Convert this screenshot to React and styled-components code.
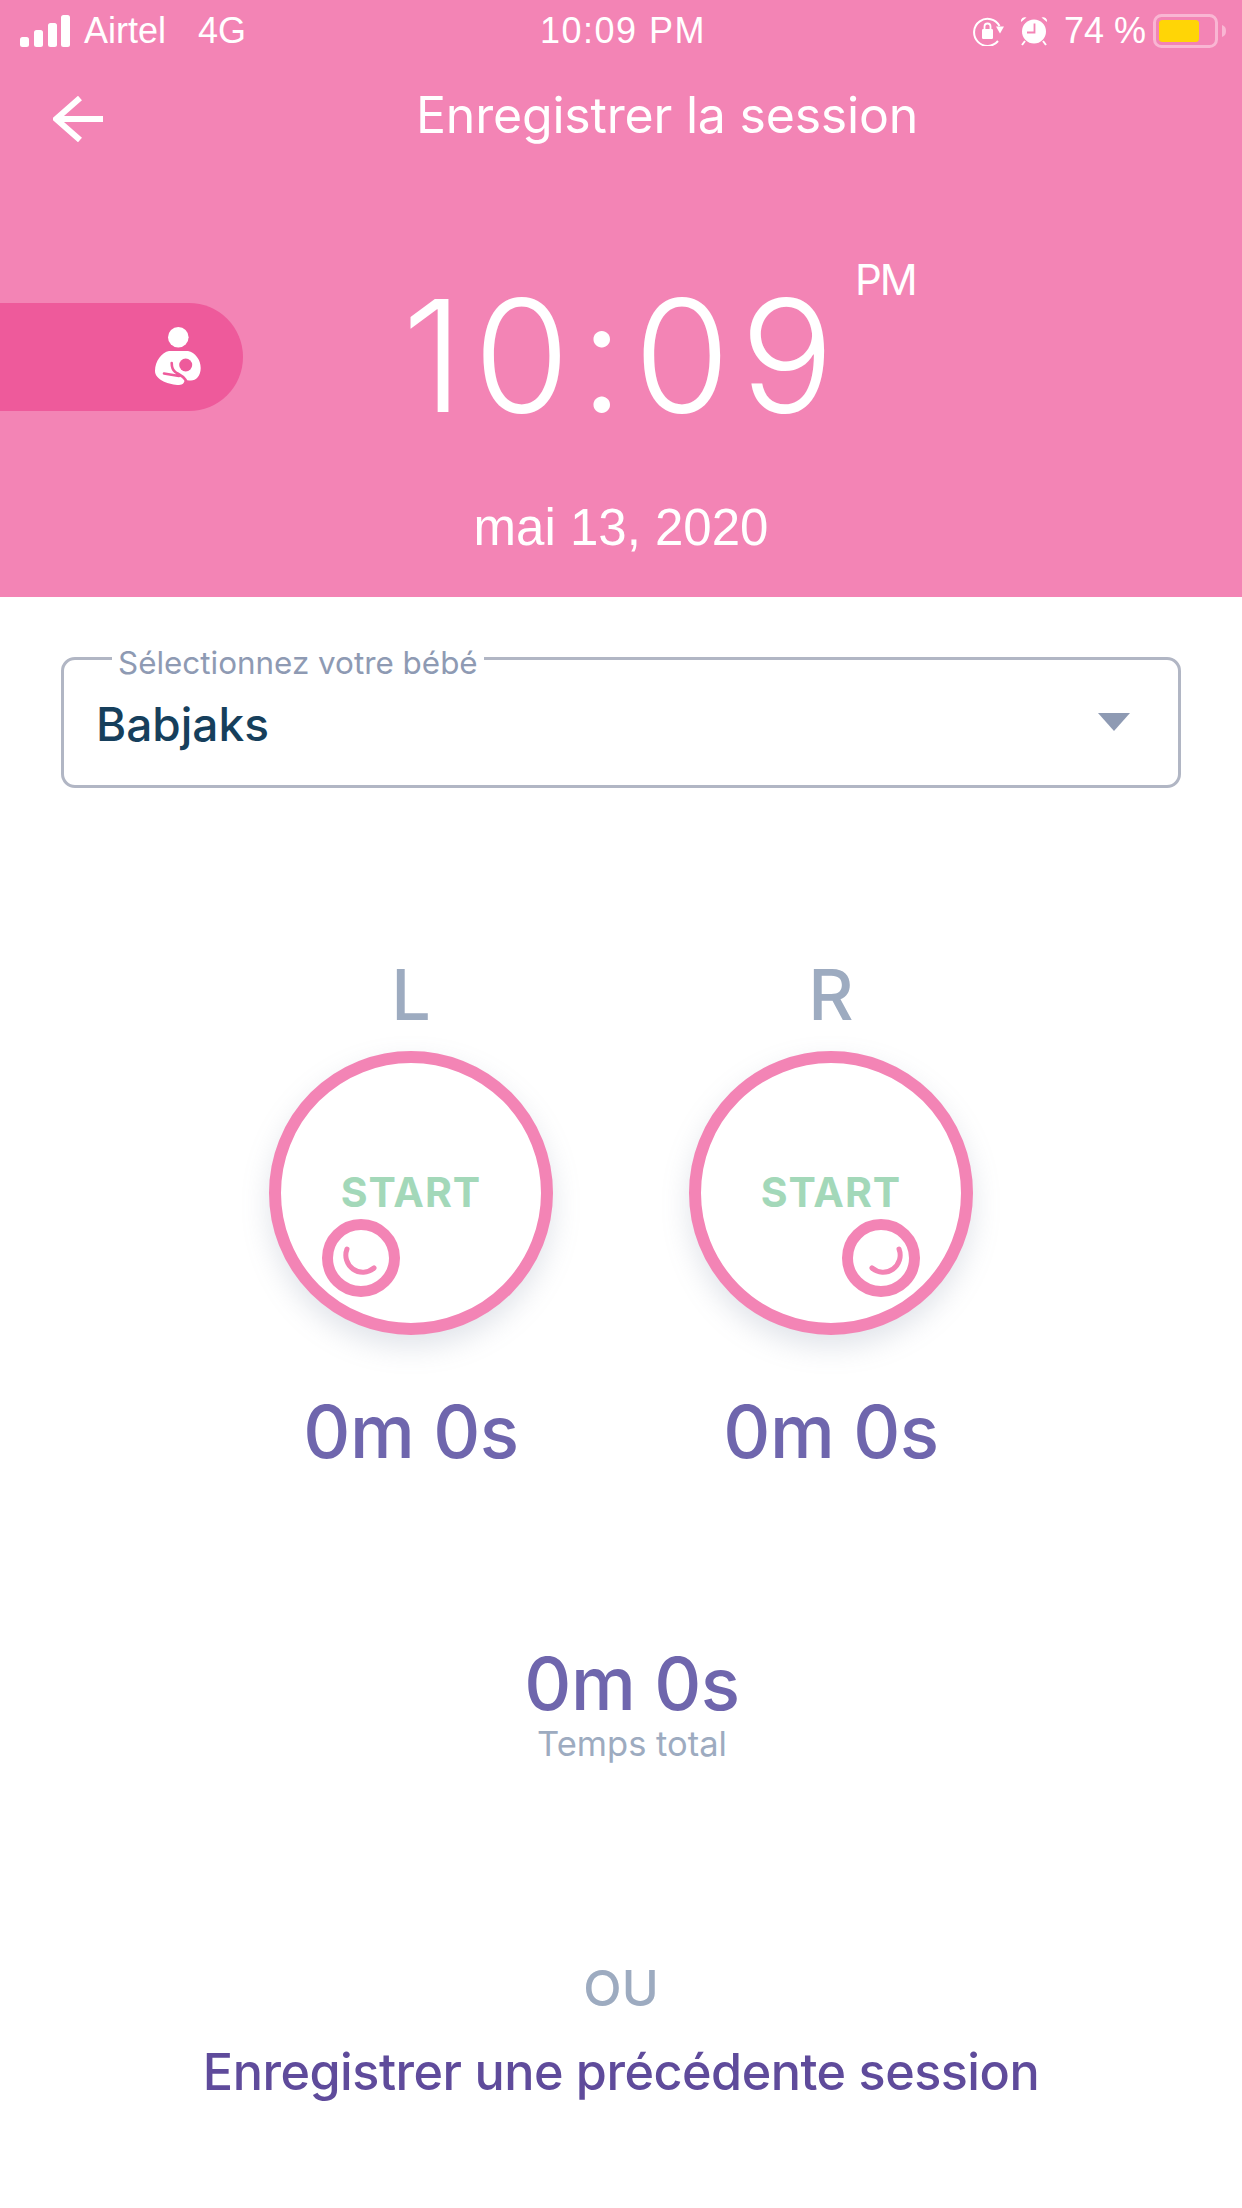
import React from 'react';
import styled, { createGlobalStyle } from 'styled-components';

const GlobalStyle = createGlobalStyle`
  html, body { margin: 0; padding: 0; background: #fff; }
  * { box-sizing: border-box; }
  body { font-family: Inter, "Liberation Sans", sans-serif; }
`;

const Page = styled.div`
  width: 1242px;
  height: 2208px;
  overflow: hidden;
  background: #fff;
`;

const Header = styled.header`
  height: 597px;
  background: #f384b5;
  color: #fff;
  display: flex;
  flex-direction: column;
`;

const StatusBar = styled.div`
  height: 62px;
  padding: 0 16px 0 20px;
  display: grid;
  grid-template-columns: 1fr auto 1fr;
  align-items: center;
  font-family: "Liberation Sans", sans-serif;
  font-size: 36px;
`;

const StatusLeft = styled.div`
  display: flex;
  align-items: center;
  gap: 14px;
`;

const StatusRight = styled.div`
  display: flex;
  align-items: center;
  justify-content: flex-end;
  gap: 16px;
`;

const StatusTime = styled.div`
  letter-spacing: 1.5px;
`;

const Carrier = styled.span`
  margin-right: 18px;
`;

const Percent = styled.span`
  margin-right: -9px;
`;

const TitleRow = styled.div`
  height: 108px;
  padding: 0 0 2px 53px;
  display: flex;
  align-items: center;
`;

const BackWrap = styled.div`
  margin-top: 8px;
  display: flex;
`;

const Title = styled.h1`
  margin: 0 0 0 313px;
  font-size: 50px;
  font-weight: 400;
  letter-spacing: -0.2px;
`;

const ClockRow = styled.div`
  display: flex;
  align-items: center;
  height: 270px;
  margin-top: 51px;
`;

const Pill = styled.div`
  width: 243px;
  height: 108px;
  margin-top: 2px;
  padding-right: 42px;
  background: #ee5a9b;
  border-radius: 0 54px 54px 0;
  display: flex;
  align-items: center;
  justify-content: flex-end;
`;

const Clock = styled.div`
  margin-left: 159px;
  display: flex;
  align-items: flex-start;
`;

const ClockTime = styled.div`
  font-size: 156px;
  font-weight: 300;
  line-height: 1;
  letter-spacing: 10px;
`;

const Meridiem = styled.div`
  margin: -24px 0 0 11px;
  font-size: 42px;
  letter-spacing: -2px;
`;

const DateLine = styled.div`
  margin-top: 7px;
  text-align: center;
  font-family: "Liberation Sans", sans-serif;
  font-size: 51px;
`;

const Field = styled.fieldset`
  margin: 41px 61px 0;
  padding: 0 32px;
  height: 150px;
  border: 3px solid #b1b6c4;
  border-radius: 14px;
  display: flex;
  align-items: center;
  justify-content: space-between;
`;

const Legend = styled.legend`
  margin-left: 16px;
  padding: 10px 6px 0;
  font-size: 31.4px;
  line-height: 31px;
  color: #8e9ab3;
`;

const FieldValue = styled.div`
  font-size: 46px;
  font-weight: 500;
  color: #163f5c;
  margin-top: -17px;
`;

const Caret = styled.div`
  margin: -20px 16px 0 0;
  width: 0;
  height: 0;
  border-left: 16px solid transparent;
  border-right: 16px solid transparent;
  border-top: 18px solid #8e9ab3;
`;

const Timers = styled.div`
  margin-top: 167px;
  display: flex;
  justify-content: center;
  gap: 120px;
`;

const Timer = styled.div`
  width: 300px;
  display: flex;
  flex-direction: column;
  align-items: center;
`;

const Side = styled.div`
  font-size: 70px;
  font-weight: 500;
  line-height: 80px;
  color: #9dabc0;
  margin-bottom: 16px;
`;

const Button = styled.div`
  position: relative;
  width: 284px;
  height: 284px;
  border: 12px solid #f384b5;
  border-radius: 50%;
  background: #fff;
  box-shadow: 0 12px 28px rgba(120, 130, 160, 0.22);
  display: flex;
  align-items: center;
  justify-content: center;
`;

const Start = styled.div`
  font-size: 41px;
  font-weight: 700;
  color: #a3d8b9;
  letter-spacing: 1px;
  margin-top: -2px;
`;

const Nipple = styled.div`
  position: absolute;
  top: 156px;
  left: ${({ $side }) => ($side === 'L' ? '41px' : '141px')};
  width: 78px;
  height: 78px;
  border: 11px solid #f384b5;
  border-radius: 50%;
  background: #fff;
  display: flex;
`;

const Duration = styled.div`
  font-size: 73px;
  font-weight: 500;
  line-height: 84px;
  color: #6f66ad;
  letter-spacing: -0.5px;
`;

const TimerDuration = styled(Duration)`
  margin-top: 55px;
`;

const TotalDuration = styled(Duration)`
  line-height: 78px;
`;

const Total = styled.div`
  margin-top: 171px;
  padding-left: 22px;
  display: flex;
  flex-direction: column;
  align-items: center;
`;

const TotalLabel = styled.div`
  font-size: 34.5px;
  line-height: 36px;
  color: #9dabc0;
  margin-top: 3px;
`;

const Or = styled.div`
  margin-top: 198px;
  text-align: center;
  font-size: 50px;
  font-weight: 500;
  line-height: 56px;
  color: #9dabc0;
`;

const PastLink = styled.div`
  margin-top: 26px;
  text-align: center;
  font-size: 50.3px;
  font-weight: 500;
  line-height: 60px;
  color: #5f4b9b;
  letter-spacing: -0.5px;
`;

const Signal = () => (
  <svg width="50" height="32" viewBox="0 0 50 32" fill="#fff">
    <rect x="0" y="22" width="9" height="10" rx="2.5" />
    <rect x="14" y="15" width="9" height="17" rx="2.5" />
    <rect x="28" y="8" width="9" height="24" rx="2.5" />
    <rect x="41" y="0" width="9" height="32" rx="2.5" />
  </svg>
);

const RotationLock = () => (
  <svg width="32" height="30" viewBox="0 0 32 30" fill="none" stroke="#fff" strokeWidth="2">
    <path d="M26 25A13.5 13.5 0 1 1 27.5 10" />
    <path d="M24 10.5h8l-4 7z" fill="#fff" stroke="none" />
    <rect x="10" y="13" width="11" height="10" rx="1.2" fill="#fff" stroke="none" />
    <path d="M12.5 13v-2.500a3 3 0 0 1 6 0V13" strokeWidth="1.8" />
  </svg>
);

const Alarm = () => (
  <svg width="28" height="30" viewBox="0 0 28 30">
    <circle cx="14" cy="15.5" r="12" fill="#fff" />
    <path d="M1 6a4 4 0 0 1 5.5-4.500zM27 6a4 4 0 0 0-5.500-4.500z" fill="#fff" />
    <path d="M5 25l-3 4M23 25l3 4" stroke="#fff" strokeWidth="2" />
    <path d="M14.5 7.5v9H7" fill="none" stroke="#f384b5" strokeWidth="1.8" />
  </svg>
);

const Battery = () => (
  <svg width="73" height="34" viewBox="0 0 73 34">
    <rect x="1.5" y="1.5" width="62" height="31" rx="7" fill="none" stroke="#f9b6d3" strokeWidth="3" />
    <rect x="6" y="6" width="40" height="22" rx="3.5" fill="#ffd506" />
    <path d="M69 11c3 1 4 3 4 6s-1 5-4 6z" fill="#f9b6d3" />
  </svg>
);

const BackArrow = () => (
  <svg width="50" height="46" viewBox="0 0 50 46" fill="none" stroke="#fff" strokeWidth="6">
    <path d="M27 2L3 23l24 21M3 23h47" />
  </svg>
);

const Nursing = () => (
  <svg width="46" height="60" viewBox="0 0 46 60">
    <circle cx="23.3" cy="10.3" r="10.3" fill="#fff" />
    <path d="M14 24h19c7 1 12.700 9 12.700 17 0 8-4.700 12.500-9.700 12.500-2.500 0-5-.5-6.500-1.500.5 3-1.500 6-5.500 6C15 58 0 53 0 44 0 34 7 25 14 24z" fill="#fff" />
    <circle cx="30.7" cy="38" r="6.5" fill="#ee5a9b" />
    <path d="M16.700 36c0 4 1 7 3.500 9 2.500 2 7 3 10.500 8M9 46.500l15 2.500" fill="none" stroke="#ee5a9b" strokeWidth="2.6" strokeLinecap="round" />
  </svg>
);

const Smile = ({ side }) => (
  <svg width="56" height="56" viewBox="0 0 56 56" fill="none" stroke="#f384b5" strokeWidth="5" strokeLinecap="round">
    {side === 'L'
      ? <path d="M14 19A17 17 0 0 0 41 38" />
      : <path d="M46 19A17 17 0 0 1 19 38" />}
  </svg>
);

const TimerCard = ({ side }) => (
  <Timer>
    <Side>{side}</Side>
    <Button>
      <Start>START</Start>
      <Nipple $side={side}>
        <Smile side={side} />
      </Nipple>
    </Button>
    <TimerDuration>0m 0s</TimerDuration>
  </Timer>
);

export default function App() {
  return (
    <Page>
      <GlobalStyle />
      <Header>
        <StatusBar>
          <StatusLeft>
            <Signal />
            <Carrier>Airtel</Carrier>
            <span>4G</span>
          </StatusLeft>
          <StatusTime>10:09 PM</StatusTime>
          <StatusRight>
            <RotationLock />
            <Alarm />
            <Percent>74 %</Percent>
            <Battery />
          </StatusRight>
        </StatusBar>
        <TitleRow>
          <BackWrap><BackArrow /></BackWrap>
          <Title>Enregistrer la session</Title>
        </TitleRow>
        <ClockRow>
          <Pill>
            <Nursing />
          </Pill>
          <Clock>
            <ClockTime>10:09</ClockTime>
            <Meridiem>PM</Meridiem>
          </Clock>
        </ClockRow>
        <DateLine>mai 13, 2020</DateLine>
      </Header>
      <Field>
        <Legend>Sélectionnez votre bébé</Legend>
        <FieldValue>Babjaks</FieldValue>
        <Caret />
      </Field>
      <Timers>
        <TimerCard side="L" />
        <TimerCard side="R" />
      </Timers>
      <Total>
        <TotalDuration>0m 0s</TotalDuration>
        <TotalLabel>Temps total</TotalLabel>
      </Total>
      <Or>OU</Or>
      <PastLink>Enregistrer une précédente session</PastLink>
    </Page>
  );
}
